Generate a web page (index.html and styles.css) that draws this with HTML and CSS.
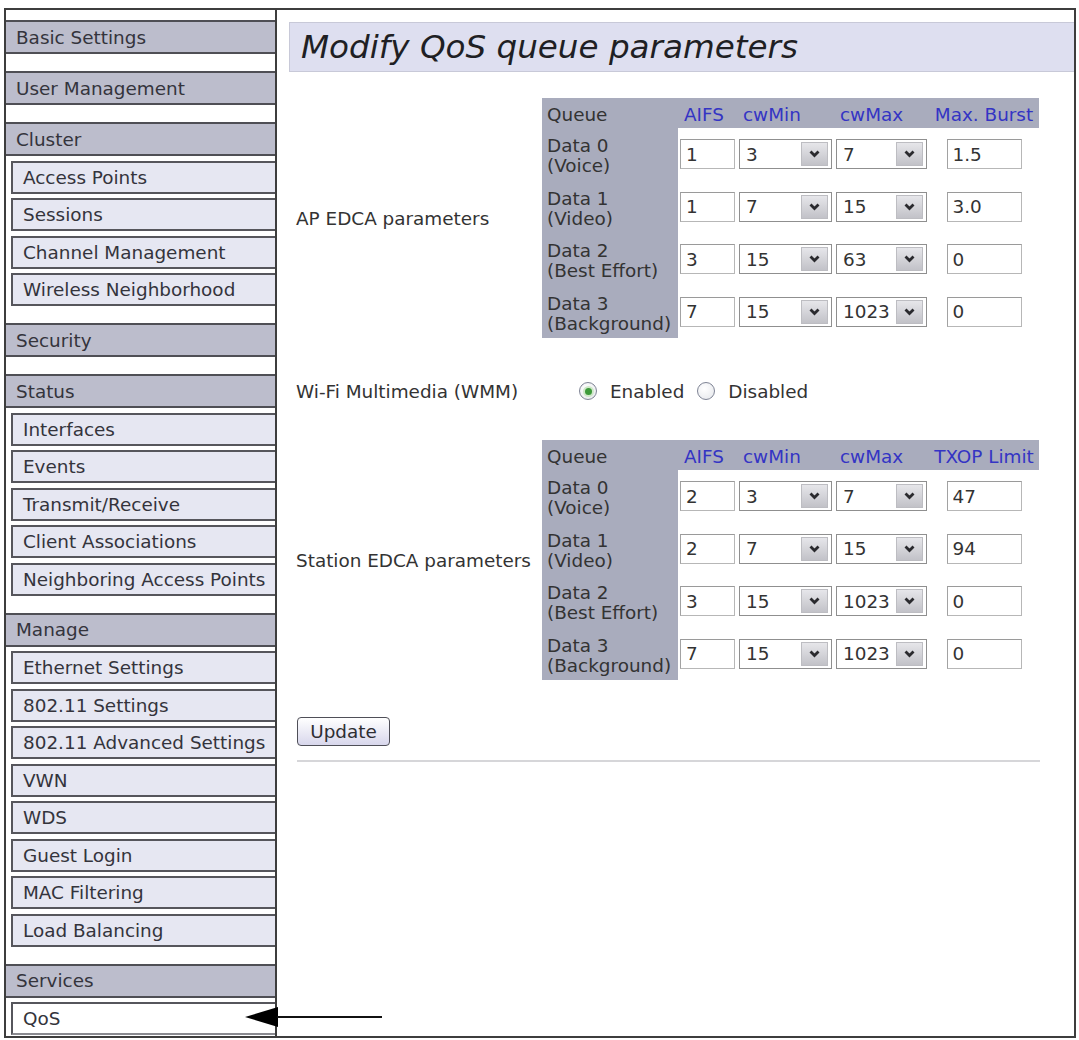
FILE: index.html
```html
<!DOCTYPE html>
<html lang="en">
<head>
<meta charset="utf-8">
<title>Modify QoS queue parameters</title>
<link rel="stylesheet" href="styles.css">
</head>
<body>
<div class="frame">
  <nav class="sidebar">
    <div class="group"><div class="nav-head">Basic Settings</div></div>
    <div class="group"><div class="nav-head">User Management</div></div>
    <div class="group">
      <div class="nav-head">Cluster</div>
      <a class="nav-item" href="#">Access Points</a>
      <a class="nav-item" href="#">Sessions</a>
      <a class="nav-item" href="#">Channel Management</a>
      <a class="nav-item" href="#">Wireless Neighborhood</a>
    </div>
    <div class="group"><div class="nav-head">Security</div></div>
    <div class="group">
      <div class="nav-head">Status</div>
      <a class="nav-item" href="#">Interfaces</a>
      <a class="nav-item" href="#">Events</a>
      <a class="nav-item" href="#">Transmit/Receive</a>
      <a class="nav-item" href="#">Client Associations</a>
      <a class="nav-item" href="#">Neighboring Access Points</a>
    </div>
    <div class="group">
      <div class="nav-head">Manage</div>
      <a class="nav-item" href="#">Ethernet Settings</a>
      <a class="nav-item" href="#">802.11 Settings</a>
      <a class="nav-item" href="#">802.11 Advanced Settings</a>
      <a class="nav-item" href="#">VWN</a>
      <a class="nav-item" href="#">WDS</a>
      <a class="nav-item" href="#">Guest Login</a>
      <a class="nav-item" href="#">MAC Filtering</a>
      <a class="nav-item" href="#">Load Balancing</a>
    </div>
    <div class="group">
      <div class="nav-head">Services</div>
      <a class="nav-item current" href="#">QoS</a>
    </div>
  </nav>

  <main class="content">
    <h1 class="page-title">Modify QoS queue parameters</h1>

    <form class="qos-form">
      <div class="field-row">
        <div class="field-label">AP EDCA parameters</div>
        <div class="edca">
          <div class="eh q">Queue</div>
          <div class="eh">AIFS</div>
          <div class="eh">cwMin</div>
          <div class="eh">cwMax</div>
          <div class="eh last">Max. Burst</div>

          <div class="qc">Data 0<br>(Voice)</div>
          <div class="ec"><input class="txt aifs" value="1"></div>
          <div class="ec"><span class="sel"><select><option>1</option><option selected>3</option><option>7</option><option>15</option></select><span class="sel-btn"><svg width="11" height="8" viewBox="0 0 11 8"><path d="M1.5 1.5 L5.5 5.5 L9.5 1.5" fill="none" stroke="#2a2a2e" stroke-width="2.8"/></svg></span></span></div>
          <div class="ec"><span class="sel"><select><option>3</option><option selected>7</option><option>15</option></select><span class="sel-btn"><svg width="11" height="8" viewBox="0 0 11 8"><path d="M1.5 1.5 L5.5 5.5 L9.5 1.5" fill="none" stroke="#2a2a2e" stroke-width="2.8"/></svg></span></span></div>
          <div class="ec last"><input class="txt wide" value="1.5"></div>

          <div class="qc">Data 1<br>(Video)</div>
          <div class="ec"><input class="txt aifs" value="1"></div>
          <div class="ec"><span class="sel"><select><option>3</option><option selected>7</option><option>15</option></select><span class="sel-btn"><svg width="11" height="8" viewBox="0 0 11 8"><path d="M1.5 1.5 L5.5 5.5 L9.5 1.5" fill="none" stroke="#2a2a2e" stroke-width="2.8"/></svg></span></span></div>
          <div class="ec"><span class="sel"><select><option>7</option><option selected>15</option><option>31</option></select><span class="sel-btn"><svg width="11" height="8" viewBox="0 0 11 8"><path d="M1.5 1.5 L5.5 5.5 L9.5 1.5" fill="none" stroke="#2a2a2e" stroke-width="2.8"/></svg></span></span></div>
          <div class="ec last"><input class="txt wide" value="3.0"></div>

          <div class="qc">Data 2<br>(Best Effort)</div>
          <div class="ec"><input class="txt aifs" value="3"></div>
          <div class="ec"><span class="sel"><select><option>7</option><option selected>15</option><option>31</option></select><span class="sel-btn"><svg width="11" height="8" viewBox="0 0 11 8"><path d="M1.5 1.5 L5.5 5.5 L9.5 1.5" fill="none" stroke="#2a2a2e" stroke-width="2.8"/></svg></span></span></div>
          <div class="ec"><span class="sel"><select><option>31</option><option selected>63</option><option>127</option></select><span class="sel-btn"><svg width="11" height="8" viewBox="0 0 11 8"><path d="M1.5 1.5 L5.5 5.5 L9.5 1.5" fill="none" stroke="#2a2a2e" stroke-width="2.8"/></svg></span></span></div>
          <div class="ec last"><input class="txt wide" value="0"></div>

          <div class="qc">Data 3<br>(Background)</div>
          <div class="ec"><input class="txt aifs" value="7"></div>
          <div class="ec"><span class="sel"><select><option>7</option><option selected>15</option><option>31</option></select><span class="sel-btn"><svg width="11" height="8" viewBox="0 0 11 8"><path d="M1.5 1.5 L5.5 5.5 L9.5 1.5" fill="none" stroke="#2a2a2e" stroke-width="2.8"/></svg></span></span></div>
          <div class="ec"><span class="sel"><select><option>511</option><option selected>1023</option></select><span class="sel-btn"><svg width="11" height="8" viewBox="0 0 11 8"><path d="M1.5 1.5 L5.5 5.5 L9.5 1.5" fill="none" stroke="#2a2a2e" stroke-width="2.8"/></svg></span></span></div>
          <div class="ec last"><input class="txt wide" value="0"></div>
        </div>
      </div>

      <div class="field-row wmm-row">
        <div class="field-label">Wi-Fi Multimedia (WMM)</div>
        <div class="radios">
          <label class="radio"><input type="radio" name="wmm" checked> Enabled</label>
          <label class="radio"><input type="radio" name="wmm"> Disabled</label>
        </div>
      </div>

      <div class="field-row">
        <div class="field-label">Station EDCA parameters</div>
        <div class="edca">
          <div class="eh q">Queue</div>
          <div class="eh">AIFS</div>
          <div class="eh">cwMin</div>
          <div class="eh">cwMax</div>
          <div class="eh last">TXOP Limit</div>

          <div class="qc">Data 0<br>(Voice)</div>
          <div class="ec"><input class="txt aifs" value="2"></div>
          <div class="ec"><span class="sel"><select><option>1</option><option selected>3</option><option>7</option></select><span class="sel-btn"><svg width="11" height="8" viewBox="0 0 11 8"><path d="M1.5 1.5 L5.5 5.5 L9.5 1.5" fill="none" stroke="#2a2a2e" stroke-width="2.8"/></svg></span></span></div>
          <div class="ec"><span class="sel"><select><option>3</option><option selected>7</option><option>15</option></select><span class="sel-btn"><svg width="11" height="8" viewBox="0 0 11 8"><path d="M1.5 1.5 L5.5 5.5 L9.5 1.5" fill="none" stroke="#2a2a2e" stroke-width="2.8"/></svg></span></span></div>
          <div class="ec last"><input class="txt wide" value="47"></div>

          <div class="qc">Data 1<br>(Video)</div>
          <div class="ec"><input class="txt aifs" value="2"></div>
          <div class="ec"><span class="sel"><select><option>3</option><option selected>7</option><option>15</option></select><span class="sel-btn"><svg width="11" height="8" viewBox="0 0 11 8"><path d="M1.5 1.5 L5.5 5.5 L9.5 1.5" fill="none" stroke="#2a2a2e" stroke-width="2.8"/></svg></span></span></div>
          <div class="ec"><span class="sel"><select><option>7</option><option selected>15</option><option>31</option></select><span class="sel-btn"><svg width="11" height="8" viewBox="0 0 11 8"><path d="M1.5 1.5 L5.5 5.5 L9.5 1.5" fill="none" stroke="#2a2a2e" stroke-width="2.8"/></svg></span></span></div>
          <div class="ec last"><input class="txt wide" value="94"></div>

          <div class="qc">Data 2<br>(Best Effort)</div>
          <div class="ec"><input class="txt aifs" value="3"></div>
          <div class="ec"><span class="sel"><select><option>7</option><option selected>15</option><option>31</option></select><span class="sel-btn"><svg width="11" height="8" viewBox="0 0 11 8"><path d="M1.5 1.5 L5.5 5.5 L9.5 1.5" fill="none" stroke="#2a2a2e" stroke-width="2.8"/></svg></span></span></div>
          <div class="ec"><span class="sel"><select><option>511</option><option selected>1023</option></select><span class="sel-btn"><svg width="11" height="8" viewBox="0 0 11 8"><path d="M1.5 1.5 L5.5 5.5 L9.5 1.5" fill="none" stroke="#2a2a2e" stroke-width="2.8"/></svg></span></span></div>
          <div class="ec last"><input class="txt wide" value="0"></div>

          <div class="qc">Data 3<br>(Background)</div>
          <div class="ec"><input class="txt aifs" value="7"></div>
          <div class="ec"><span class="sel"><select><option>7</option><option selected>15</option><option>31</option></select><span class="sel-btn"><svg width="11" height="8" viewBox="0 0 11 8"><path d="M1.5 1.5 L5.5 5.5 L9.5 1.5" fill="none" stroke="#2a2a2e" stroke-width="2.8"/></svg></span></span></div>
          <div class="ec"><span class="sel"><select><option>511</option><option selected>1023</option></select><span class="sel-btn"><svg width="11" height="8" viewBox="0 0 11 8"><path d="M1.5 1.5 L5.5 5.5 L9.5 1.5" fill="none" stroke="#2a2a2e" stroke-width="2.8"/></svg></span></span></div>
          <div class="ec last"><input class="txt wide" value="0"></div>
        </div>
      </div>

      <div class="actions"><button type="button" class="btn">Update</button></div>
      <hr class="rule">
    </form>
  </main>
</div>

<svg class="pointer" width="140" height="22" viewBox="0 0 140 22">
  <polygon points="1,11 34,1 34,21" fill="#000"/>
  <line x1="33" y1="11" x2="138" y2="11" stroke="#111" stroke-width="2"/>
</svg>
</body>
</html>
```

FILE: styles.css
```css
* {
  box-sizing: border-box;
}

body {
  margin: 0;
  background: #fff;
  font-family: "DejaVu Sans", Verdana, sans-serif;
  font-size: 18.4px;
  color: #333;
}

/* outer frame: menu column + content panel */
.frame {
  display: flex;
  margin: 8px 0 0 4px;
  width: 1072px;
  height: 1030px;
  border: 2px solid #3d3d3d;
}

/* ---------- left menu ---------- */
.sidebar {
  width: 269px;
  flex: none;
  padding-top: 10px;
  display: flex;
  flex-direction: column;
  gap: 17px;
}

.group {
  display: flex;
  flex-direction: column;
  gap: 4.5px;
}

.nav-head {
  height: 34px;
  border-top: 2px solid #4f4f55;
  border-bottom: 2px solid #4f4f55;
  background: #bcbdcc;
  padding-left: 10px;
  display: flex;
  align-items: center;
  color: #34343c;
}

.nav-item {
  margin-left: 5px;
  height: 33px;
  border: 2px solid #56565c;
  border-right: none;
  background: #e6e7f2;
  padding-left: 10px;
  display: flex;
  align-items: center;
  color: #34343c;
  text-decoration: none;
}

.nav-item.current {
  background: #fff;
  border-bottom-color: #8a8a90;
}

/* ---------- content panel ---------- */
.content {
  flex: 1;
  border-left: 2px solid #3d3d3d;
  padding: 12px 0 0 12px;
}

.page-title {
  margin: 0;
  height: 50px;
  background: #dedff0;
  border: 1px solid #c8c9d8;
  border-right: none;
  padding-left: 11px;
  display: flex;
  align-items: center;
  font-size: 32.6px;
  font-style: italic;
  font-weight: normal;
  color: #1f1f24;
}

.qos-form {
  margin: 26px 0 0;
}

.field-row {
  display: flex;
  align-items: center;
}

.field-label {
  width: 253px;
  flex: none;
  padding-left: 7px;
}

/* EDCA parameter grid */
.edca {
  display: grid;
  grid-template-columns: 136px 59px 97px 95px 110px;
  grid-template-rows: 30px repeat(4, 52.5px);
}

.eh {
  background: #a9acbd;
  color: #3434c4;
  padding: 3px 0 0 6px;
  display: flex;
  align-items: center;
  white-space: nowrap;
}

.eh.q {
  color: #333;
  padding-left: 5px;
}

.eh.last {
  justify-content: center;
  padding-left: 0;
}

.qc {
  background: #a9acbd;
  color: #333;
  padding: 4px 0 0 5px;
  line-height: 20px;
  display: flex;
  align-items: center;
  white-space: nowrap;
}

.ec {
  display: flex;
  align-items: center;
  padding: 0 2px;
}

.ec.last {
  justify-content: center;
}

.txt {
  height: 30px;
  border: 1px solid #b7b7b7;
  border-top-color: #9a9a9a;
  border-left-color: #a2a2a2;
  padding: 0 0 0 5px;
  font: inherit;
  color: #333;
  background: #fff;
}

.txt.aifs {
  width: 55px;
}

.txt.wide {
  width: 75px;
}

.sel {
  display: flex;
  width: 93px;
  height: 30px;
  border: 1px solid #8f8f8f;
  background: #fff;
}

.ec:nth-child(5n+4) .sel {
  width: 91px;
}

.sel select {
  flex: 1;
  min-width: 0;
  appearance: none;
  -webkit-appearance: none;
  border: none;
  background: transparent;
  font: inherit;
  color: #333;
  padding: 0 0 0 6px;
  outline: none;
}

.sel-btn {
  width: 27px;
  margin: 2px 3px 2px 0;
  flex: none;
  display: flex;
  align-items: center;
  justify-content: center;
  border: 1px solid #bdbdc2;
  background: linear-gradient(#e6e6ea, #c2c2c8);
}

/* WMM radio row */
.wmm-row {
  height: 102px;
  padding-top: 4px;
}

.radios {
  display: flex;
  align-items: center;
  margin-left: 37px;
  gap: 13px;
}

.radio {
  display: flex;
  align-items: center;
  gap: 13px;
}

.radio input {
  appearance: none;
  -webkit-appearance: none;
  margin: 0;
  width: 18px;
  height: 18px;
  border-radius: 50%;
  border: 1px solid #7e8394;
  background: radial-gradient(circle at 40% 35%, #ffffff, #e4e6ea);
  display: grid;
  place-items: center;
}

.radio input:checked::after {
  content: "";
  width: 7px;
  height: 7px;
  border-radius: 50%;
  background: #3d9a3a;
  box-shadow: 0 0 0 2px #cfe8c9;
}

/* submit + divider */
.actions {
  margin-top: 37px;
  padding-left: 8px;
}

.btn {
  width: 93px;
  height: 29px;
  border: 1px solid #4f4f58;
  border-radius: 4px;
  background: linear-gradient(#ffffff, #d8d7ec);
  font: inherit;
  color: #2e2e33;
  padding: 0;
}

.rule {
  margin: 14px 0 0 8px;
  width: 743px;
  border: none;
  border-top: 2px solid #d6d6d9;
  height: 0;
}

/* annotation arrow pointing at the current menu entry */
.pointer {
  position: absolute;
  left: 244px;
  top: 1006px;
}
```
